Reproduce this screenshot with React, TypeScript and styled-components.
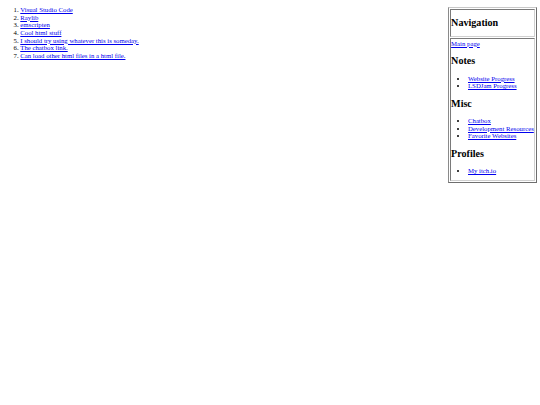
import React from "react";
import styled, { createGlobalStyle } from "styled-components";

const GlobalStyle = createGlobalStyle`
  html, body {
    margin: 0;
    padding: 0;
    background: #ffffff;
  }
  body {
    font-family: "Liberation Serif", "Times New Roman", serif;
    font-size: 6.75px;
    color: #000000;
  }
`;

const Page = styled.div`
  display: flex;
  justify-content: space-between;
  align-items: flex-start;
  padding: 0 3.4px 0 3.4px;
`;

const LinkList = styled.ol`
  margin: 6.4px 0 0 0;
  padding-left: 16.9px;
`;

const Item = styled.li<{ $tight?: boolean }>`
  line-height: ${(p) => (p.$tight ? "7.45px" : "7.55px")};
`;

const A = styled.a`
  color: #0000ee;
  text-decoration: underline;
`;

const Sidebar = styled.div`
  margin-top: 6.7px;
  width: 89px;
  box-sizing: border-box;
  display: flex;
  flex-direction: column;
  gap: 1px;
  padding: 1px;
  border: 1px solid;
  border-color: #c8c8c8 #6e6e6e #6e6e6e #8a8a8a;
`;

const Cell = styled.div<{ $head?: boolean }>`
  box-sizing: border-box;
  border: 1px solid;
  border-color: #7a7a7a #d0d0d0 #d0d0d0 #7a7a7a;
  padding: ${(p) => (p.$head ? "0 0 0 0.5px" : "1px 0 0 0.5px")};
  height: ${(p) => (p.$head ? "28px" : "143.5px")};
`;

const Heading = styled.h2<{ $first?: boolean }>`
  font-size: 10.1px;
  font-weight: bold;
  line-height: 11.6px;
  margin: ${(p) => (p.$first ? "7.7px 0 0 0" : "8px 0 8px 0")};
`;

const Bullets = styled.ul`
  margin: 0;
  padding-left: 16.9px;
  list-style: disc;
  white-space: nowrap;
`;

const Line = styled.div`
  line-height: 7.6px;
`;

const links = [
  "Visual Studio Code",
  "Raylib",
  "emscripten",
  "Cool html stuff",
  "I should try using whatever this is someday.",
  "The chatbox link.",
  "Can load other html files in a html file.",
];

const sections = [
  { title: "Notes", items: ["Website Progress", "LSDJam Progress"] },
  { title: "Misc", items: ["Chatbox", "Development Resources", "Favorite Websites"] },
  { title: "Profiles", items: ["My itch.io"] },
];

export default function App() {
  return (
    <>
      <GlobalStyle />
      <Page>
        <LinkList>
          {links.map((l) => (
            <Item key={l}>
              <A href="#">{l}</A>
            </Item>
          ))}
        </LinkList>
        <Sidebar>
          <Cell $head>
            <Heading $first>Navigation</Heading>
          </Cell>
          <Cell>
            <Line>
              <A href="#">Main page</A>
            </Line>
            {sections.map((s) => (
              <div key={s.title}>
                <Heading>{s.title}</Heading>
                <Bullets>
                  {s.items.map((i) => (
                    <Item key={i} $tight>
                      <A href="#">{i}</A>
                    </Item>
                  ))}
                </Bullets>
              </div>
            ))}
          </Cell>
        </Sidebar>
      </Page>
    </>
  );
}
